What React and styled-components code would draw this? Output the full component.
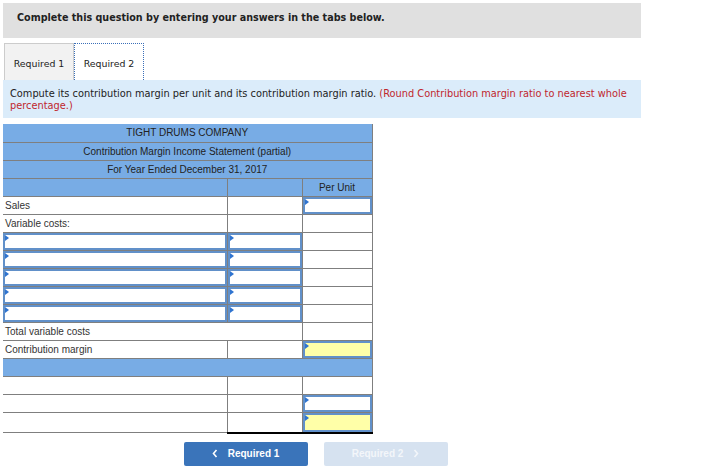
import styled, { createGlobalStyle } from "styled-components";

const GlobalStyle = createGlobalStyle`
  body {
    margin: 0;
    background: #ffffff;
    font-family: "DejaVu Sans", Verdana, sans-serif;
  }
`;

const Page = styled.div`
  padding: 3px 0 0 3px;
  width: 638px;
`;

const Banner = styled.div`
  height: 35px;
  box-sizing: border-box;
  padding: 9px 0 0 14px;
  background: #e0e0e0;
  font-size: 9.6px;
  font-weight: bold;
  color: #222;
`;

const Tabs = styled.div`
  display: flex;
  margin-top: 5px;
  padding-left: 1px;
`;

const Tab = styled.div`
  width: 70px;
  height: 37px;
  box-sizing: border-box;
  display: flex;
  align-items: center;
  justify-content: center;
  font-size: 9.4px;
  color: #222;
  background: ${(p) => (p.$active ? "#ffffff" : "#f2f2f2")};
  border: 1px ${(p) => (p.$active ? "dotted #3a6fb8" : "solid #cccccc")};
  border-bottom: none;
  padding-top: 2px;
`;

const Prompt = styled.div`
  background: #dbecfa;
  padding: 8px 4px 6px 7px;
  font-size: 9.8px;
  line-height: 12px;
  color: #222;
`;

const Hint = styled.span`
  color: #c0262d;
`;

const Sheet = styled.table`
  margin-top: 6px;
  width: 369px;
  border-collapse: collapse;
  font-family: "Liberation Sans", Arial, sans-serif;
  font-size: 10px;
  color: #222;
  table-layout: fixed;
`;

const Row = styled.tr`
  height: ${(p) => (p.$tall ? "20px" : "18px")};
`;

const Cell = styled.td`
  padding: 0;
  border-bottom: 1px solid #7f7f7f;
  border-right: 1px solid #7f7f7f;
  background: ${(p) => (p.$head ? "#78ace5" : "#ffffff")};
  text-align: ${(p) => (p.$center ? "center" : "left")};
  vertical-align: middle;
  ${(p) => (p.$topBlack ? "border-top: 1px solid #000;" : "")}
  ${(p) => (p.$bottomBlack ? "border-bottom: 2px solid #000;" : "")}
`;

const Label = styled.span`
  padding-left: 2px;
  color: #333;
`;

const Entry = styled.div`
  position: relative;
  height: ${(p) => (p.$tall ? "19px" : "17px")};
  box-sizing: border-box;
  border: 2px solid #6190c9;
  background: ${(p) => (p.$yellow ? "#ffffa8" : "#ffffff")};
  &::before {
    content: "";
    position: absolute;
    left: 0;
    top: 0;
    border-top: 3px solid transparent;
    border-bottom: 3px solid transparent;
    border-left: 4px solid #2f74d0;
  }
`;

const ButtonRow = styled.div`
  width: 625px;
  margin-top: 8px;
  display: flex;
  justify-content: center;
  gap: 16px;
`;

const NavButton = styled.button`
  width: 124px;
  height: 24px;
  border: none;
  border-radius: 2px;
  background: ${(p) => (p.$disabled ? "#d6e2f0" : "#3a74ba")};
  color: ${(p) => (p.$disabled ? "#f3f6fa" : "#ffffff")};
  font-family: "Liberation Sans", Arial, sans-serif;
  font-weight: bold;
  font-size: 10px;
  display: flex;
  align-items: center;
  justify-content: center;
  gap: 10px;
  padding: 0;
`;

const Chevron = ({ dir }) => (
  <svg width="6" height="9" viewBox="0 0 6 9">
    <path
      d={dir === "left" ? "M4.5 1 L1.5 4.5 L4.5 8" : "M1.5 1 L4.5 4.5 L1.5 8"}
      fill="none"
      stroke="currentColor"
      strokeWidth="1.6"
    />
  </svg>
);

export default function App() {
  return (
    <>
      <GlobalStyle />
      <Page>
        <Banner>Complete this question by entering your answers in the tabs below.</Banner>
        <Tabs>
          <Tab>Required 1</Tab>
          <Tab $active>Required 2</Tab>
        </Tabs>
        <Prompt>
          Compute its contribution margin per unit and its contribution margin ratio.{" "}
          <Hint>(Round Contribution margin ratio to nearest whole percentage.)</Hint>
        </Prompt>
        <Sheet>
          <colgroup>
            <col style={{ width: 224 }} />
            <col style={{ width: 75 }} />
            <col style={{ width: 70 }} />
          </colgroup>
          <tbody>
            <Row>
              <Cell $head $center colSpan={3}>TIGHT DRUMS COMPANY</Cell>
            </Row>
            <Row>
              <Cell $head $center colSpan={3}>Contribution Margin Income Statement (partial)</Cell>
            </Row>
            <Row>
              <Cell $head $center colSpan={3}>For Year Ended December 31, 2017</Cell>
            </Row>
            <Row>
              <Cell $head />
              <Cell $head />
              <Cell $head $center>Per Unit</Cell>
            </Row>
            <Row>
              <Cell><Label>Sales</Label></Cell>
              <Cell />
              <Cell><Entry /></Cell>
            </Row>
            <Row>
              <Cell><Label>Variable costs:</Label></Cell>
              <Cell />
              <Cell />
            </Row>
            {[0, 1, 2, 3, 4].map((i) => (
              <Row key={i}>
                <Cell><Entry /></Cell>
                <Cell><Entry /></Cell>
                <Cell />
              </Row>
            ))}
            <Row>
              <Cell colSpan={2}><Label>Total variable costs</Label></Cell>
              <Cell />
            </Row>
            <Row>
              <Cell><Label>Contribution margin</Label></Cell>
              <Cell />
              <Cell $topBlack><Entry $yellow /></Cell>
            </Row>
            <Row>
              <Cell $head colSpan={3} />
            </Row>
            <Row>
              <Cell />
              <Cell />
              <Cell />
            </Row>
            <Row>
              <Cell />
              <Cell />
              <Cell><Entry /></Cell>
            </Row>
            <Row $tall>
              <Cell />
              <Cell $topBlack $bottomBlack />
              <Cell $bottomBlack><Entry $yellow $tall /></Cell>
            </Row>
          </tbody>
        </Sheet>
        <ButtonRow>
          <NavButton>
            <Chevron dir="left" />
            Required 1
          </NavButton>
          <NavButton $disabled>
            Required 2
            <Chevron dir="right" />
          </NavButton>
        </ButtonRow>
      </Page>
    </>
  );
}
